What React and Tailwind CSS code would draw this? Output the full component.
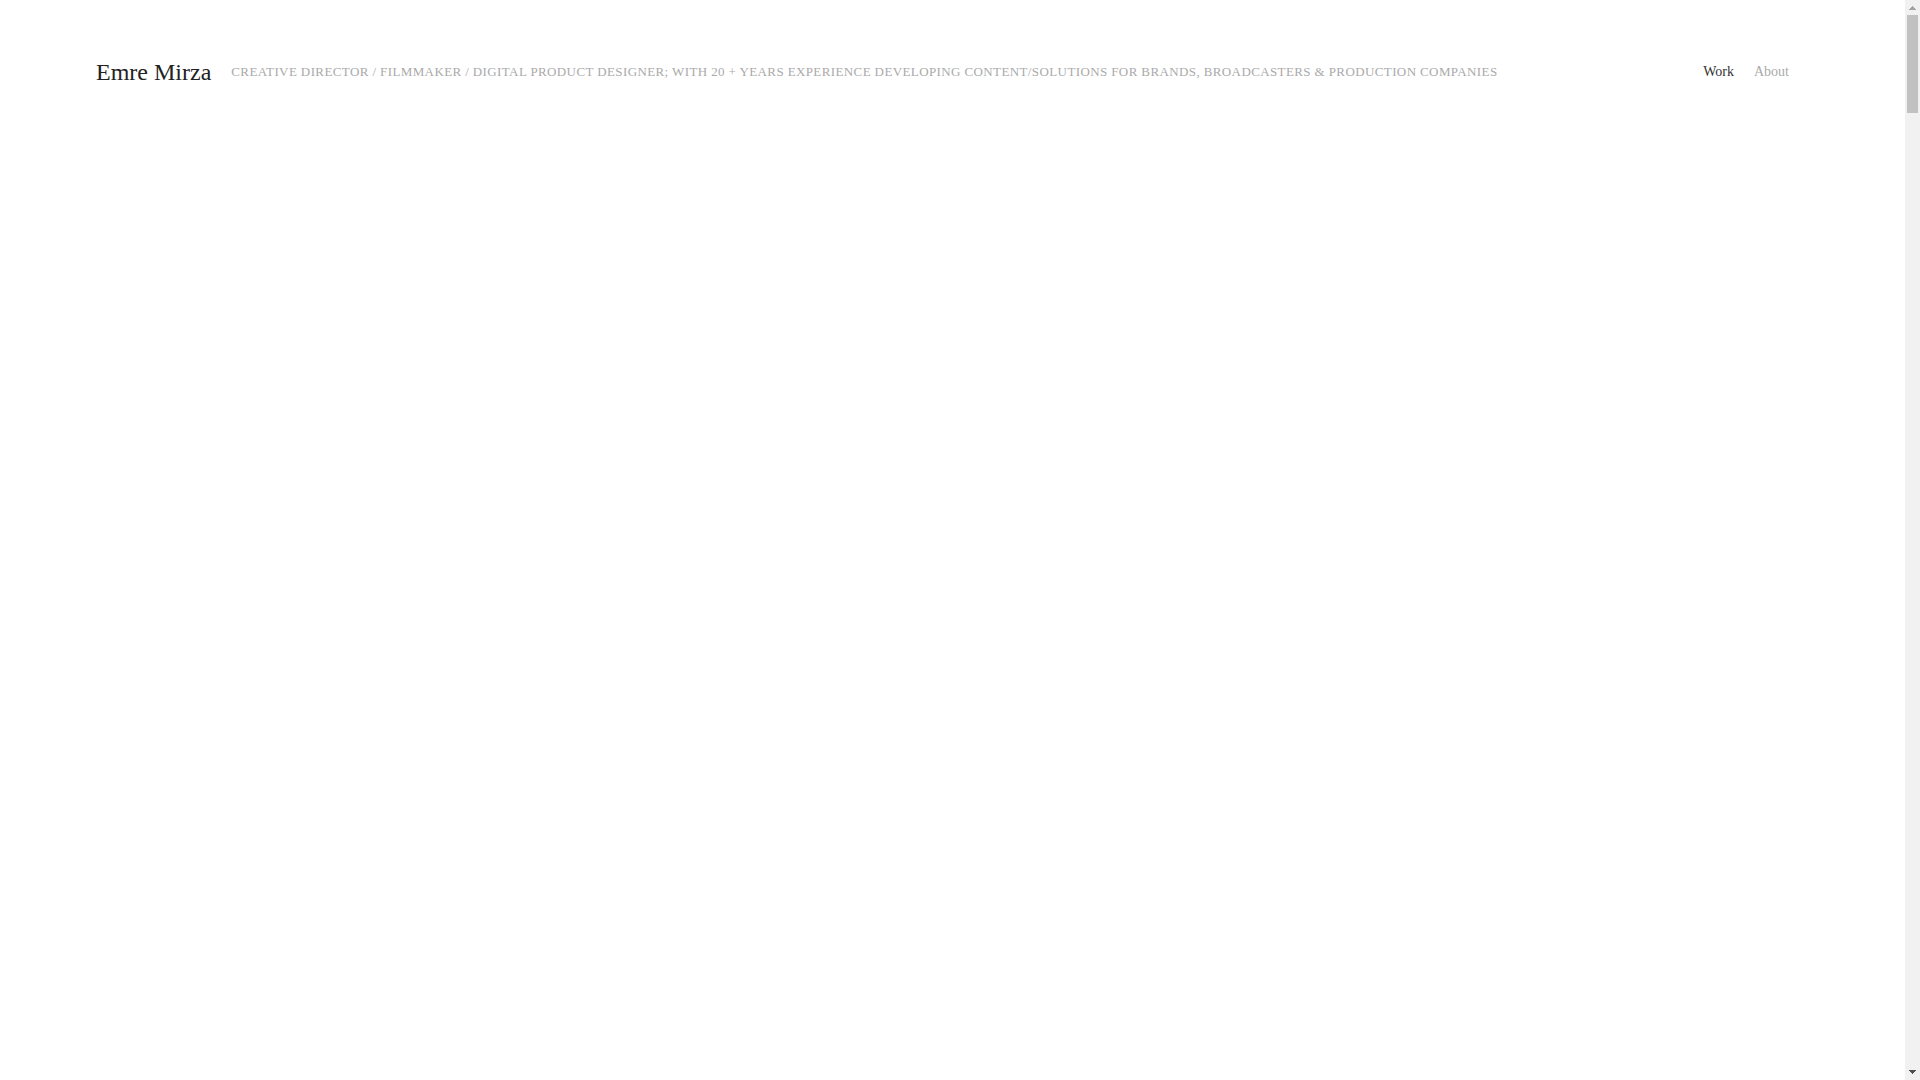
const links = [
  { label: 'Work', href: '#work', active: true },
  { label: 'About', href: '#about', active: false },
];

const Header = () => {
  return (
    <header className="flex items-center justify-between pl-24 pr-29 pt-14 pb-16">
      <div className="flex items-center gap-5">
        <h1 className="text-2xl text-[#222222] whitespace-nowrap">
          <a href="#home">Emre Mirza</a>
        </h1>
        <p className="text-[13px] leading-5 tracking-[0.03em] uppercase text-[#aaaaaa]">
          Creative Director / Filmmaker / Digital Product Designer; with 20 + years experience
          developing content/solutions for brands, broadcasters &amp; production companies
        </p>
      </div>

      <nav className="flex gap-5 text-sm">
        {links.map((link) => (
          <a
            key={link.label}
            href={link.href}
            className={link.active ? 'text-[#333333]' : 'text-[#aaaaaa] hover:text-[#333333]'}
          >
            {link.label}
          </a>
        ))}
      </nav>
    </header>
  );
};

const Scrollbar = () => {
  return (
    <div className="w-[15px] shrink-0 flex flex-col items-center bg-[#f1f1f1]" aria-hidden="true">
      <svg className="w-[15px] h-[15px] shrink-0" viewBox="0 0 15 15" shapeRendering="crispEdges">
        <path d="M4 10V9h1V8h1V7h1V6h1v1h1v1h1v1h1v1z" fill="#a3a3a3" />
      </svg>
      <div className="w-[11px] h-[98px] bg-[#c1c1c1]" />
      <svg className="w-[15px] h-[15px] shrink-0 mt-auto" viewBox="0 0 15 15" shapeRendering="crispEdges">
        <path d="M4 5v1h1v1h1v1h1v1h1V8h1V7h1V6h1V5z" fill="#505050" />
      </svg>
    </div>
  );
};

const App = () => {
  return (
    <div className="flex h-screen bg-white font-['Liberation_Serif',serif]">
      <div className="flex-1 min-w-0">
        <Header />
        <main />
      </div>
      <Scrollbar />
    </div>
  );
};

export default App;
